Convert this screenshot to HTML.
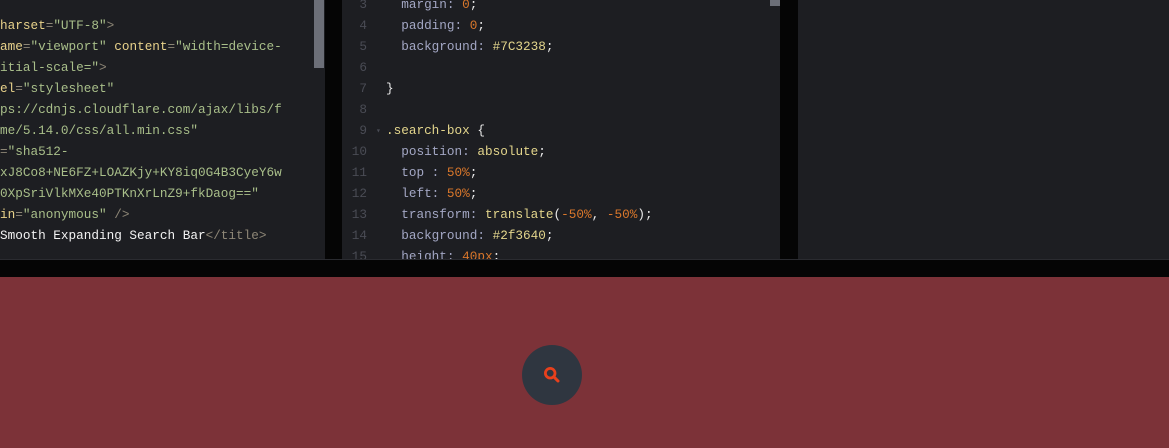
<!DOCTYPE html>
<html><head><meta charset="UTF-8"><style>
*{margin:0;padding:0}
body{width:1169px;height:448px;overflow:hidden;background:#7c3238;position:relative;font-family:"Liberation Mono",monospace;font-size:12.7px}
.pane{position:absolute;top:0;height:260px;background:#1d1e22;overflow:hidden}
.code{position:absolute;top:-6px;line-height:21px;white-space:pre;color:#a3a7c4}
.ln{position:absolute;top:-6px;line-height:21px;white-space:pre;color:#4a4c55;text-align:right;width:28px}
.a{color:#e8d28b}.s{color:#a9bf8a}.t{color:#8d8676}.w{color:#f3f3f3}.n{color:#d9772b}.p{color:#a3a7c4}.y{color:#e3d58c}.b{color:#e9e9e9}
</style></head><body>
<div style="position:absolute;left:0;top:0;width:1169px;height:277px;background:#050505"></div>
<div class="pane" style="left:0;width:325px">
<div class="code" style="left:0"> 
<span class="a">harset</span><span class="t">=</span><span class="s">"UTF-8"</span><span class="t">&gt;</span>
<span class="a">ame</span><span class="t">=</span><span class="s">"viewport"</span> <span class="a">content</span><span class="t">=</span><span class="s">"width=device-</span>
<span class="s">itial-scale="</span><span class="t">&gt;</span>
<span class="a">el</span><span class="t">=</span><span class="s">"stylesheet"</span>
<span class="s">ps://cdnjs.cloudflare.com/ajax/libs/f</span>
<span class="s">me/5.14.0/css/all.min.css"</span>
<span class="t">=</span><span class="s">"sha512-</span>
<span class="s">xJ8Co8+NE6FZ+LOAZKjy+KY8iq0G4B3CyeY6w</span>
<span class="s">0XpSriVlkMXe40PTKnXrLnZ9+fkDaog=="</span>
<span class="a">in</span><span class="t">=</span><span class="s">"anonymous"</span> <span class="t">/&gt;</span>
<span class="w">Smooth Expanding Search Bar</span><span class="t">&lt;/title&gt;</span></div>
<div style="position:absolute;left:314px;top:0;width:10px;height:68px;background:#6c6f78"></div>
</div>
<div class="pane" style="left:342px;width:438px">
<div class="ln" style="left:-3px">3
4
5
6
7
8
9
10
11
12
13
14
15</div>
<div style="position:absolute;left:34px;top:126px;color:#4a4c55;font-size:8px">▾</div>
<div class="code" style="left:44px">  margin: <span class="n">0</span><span class="b">;</span>
  padding: <span class="n">0</span><span class="b">;</span>
  background: <span class="y">#7C3238</span><span class="b">;</span>

<span class="b">}</span>

<span class="y">.search-box</span> <span class="b">{</span>
  position: <span class="y">absolute</span><span class="b">;</span>
  top : <span class="n">50%</span><span class="b">;</span>
  left: <span class="n">50%</span><span class="b">;</span>
  transform: <span class="y">translate</span><span class="b">(</span><span class="n">-50%</span><span class="b">,</span> <span class="n">-50%</span><span class="b">);</span>
  background: <span class="y">#2f3640</span><span class="b">;</span>
  height: <span class="n">40px</span><span class="b">;</span></div>
<div style="position:absolute;left:428px;top:0;width:10px;height:6px;background:#6c6f78"></div>
</div>
<div class="pane" style="left:798px;width:371px"></div>
<div style="position:absolute;left:0;top:259px;width:1169px;height:1px;background:#2a2b30"></div>
<div style="position:absolute;left:522px;top:345px;width:60px;height:60px;border-radius:50%;background:#2f3640"></div>
<svg style="position:absolute;left:543px;top:366px" width="18" height="18" viewBox="0 0 18 18"><circle cx="7.2" cy="7.2" r="4.8" fill="none" stroke="#e8401c" stroke-width="2.8"/><path d="M10.8 10.8L15 15" stroke="#e8401c" stroke-width="3" stroke-linecap="round"/></svg>
</body></html>
